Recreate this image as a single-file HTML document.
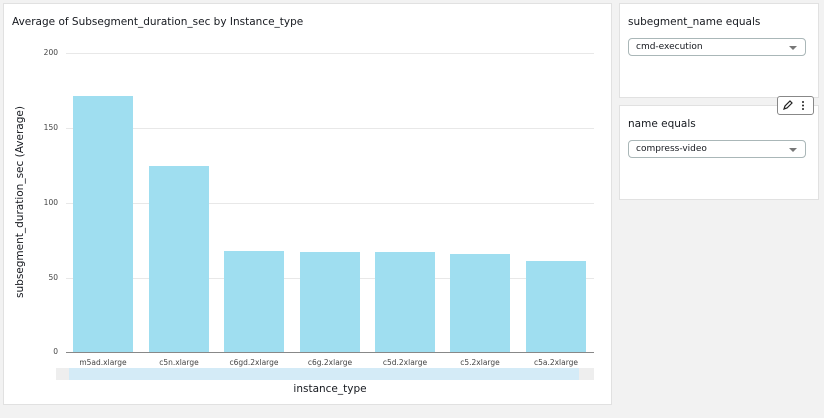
<html><head><style>
body{margin:0;width:824px;height:418px;background:#f2f2f2;font-family:"DejaVu Sans","Liberation Sans",sans-serif;position:relative;overflow:hidden;color:#16191f}
.p{position:absolute;background:#fff;border:1px solid #e1e1e1}
.t{position:absolute;font-size:11px;white-space:nowrap}
.bar{position:absolute;background:#9fdef0;bottom:66px;width:60px}
.g{position:absolute;left:66px;width:528px;height:1px;background:#e8e8e8}
.yl{position:absolute;font-size:7.5px;color:#444;width:30px;text-align:right;left:28px}
.xl{position:absolute;top:358px;font-size:7.5px;color:#444;width:76px;text-align:center}
.sel{position:absolute;left:8px;width:178px;height:18px;border:1px solid #aab7b8;border-radius:4px;font-size:9px;line-height:17px;padding-left:7px;box-sizing:border-box}
.sel:after{content:"";position:absolute;right:8px;top:7px;border:4px solid transparent;border-top:4px solid #777;border-bottom:0}
</style></head><body>
<div class="p" style="left:3px;top:3px;width:607px;height:400px"></div>
<div class="t" style="left:12px;top:16px;font-size:10.5px">Average of Subsegment_duration_sec by Instance_type</div>
<div class="g" style="top:53px"></div><div class="g" style="top:128px"></div><div class="g" style="top:203px"></div><div class="g" style="top:278px"></div>
<div class="yl" style="top:48px">200</div><div class="yl" style="top:123px">150</div><div class="yl" style="top:198px">100</div><div class="yl" style="top:273px">50</div><div class="yl" style="top:347px">0</div>
<div class="t" style="left:-80px;top:196px;width:200px;text-align:center;transform:rotate(-90deg);font-size:10.5px">subsegment_duration_sec (Average)</div>
<div class="bar" style="left:73px;top:96px"></div>
<div class="bar" style="left:149px;top:166px"></div>
<div class="bar" style="left:224px;top:251px"></div>
<div class="bar" style="left:300px;top:252px"></div>
<div class="bar" style="left:375px;top:252px"></div>
<div class="bar" style="left:450px;top:254px"></div>
<div class="bar" style="left:526px;top:261px"></div>
<div style="position:absolute;left:66px;top:352px;width:528px;height:1px;background:#888"></div>
<div class="xl" style="left:65px">m5ad.xlarge</div><div class="xl" style="left:141px">c5n.xlarge</div><div class="xl" style="left:216px">c6gd.2xlarge</div><div class="xl" style="left:292px">c6g.2xlarge</div><div class="xl" style="left:367px">c5d.2xlarge</div><div class="xl" style="left:442px">c5.2xlarge</div><div class="xl" style="left:518px">c5a.2xlarge</div>
<div style="position:absolute;left:56px;top:368px;width:538px;height:12px;background:#eee"></div>
<div style="position:absolute;left:69px;top:368px;width:510px;height:12px;background:#d4ebf7"></div>
<div class="t" style="left:260px;top:383px;width:140px;text-align:center;font-size:10.5px">instance_type</div>
<div class="p" style="left:619px;top:3px;width:198px;height:93px"><div class="t" style="left:8px;top:12px;font-size:10.5px">subegment_name equals</div><div class="sel" style="top:34px">cmd-execution</div></div>
<div class="p" style="left:619px;top:105px;width:198px;height:93px"><div class="t" style="left:8px;top:12px;font-size:10.5px">name equals</div><div class="sel" style="top:34px">compress-video</div></div>
<div style="position:absolute;left:777px;top:96px;width:35px;height:17px;background:#fff;border:1px solid #888;border-radius:3px">
<svg width="35" height="17" style="position:absolute;left:0;top:0"><path d="M6 12l1-3 5-5 2 2-5 5z" fill="none" stroke="#222" stroke-width="1.2"/><circle cx="25" cy="5" r="1" fill="#222"/><circle cx="25" cy="8.5" r="1" fill="#222"/><circle cx="25" cy="12" r="1" fill="#222"/></svg></div>
</body></html>
